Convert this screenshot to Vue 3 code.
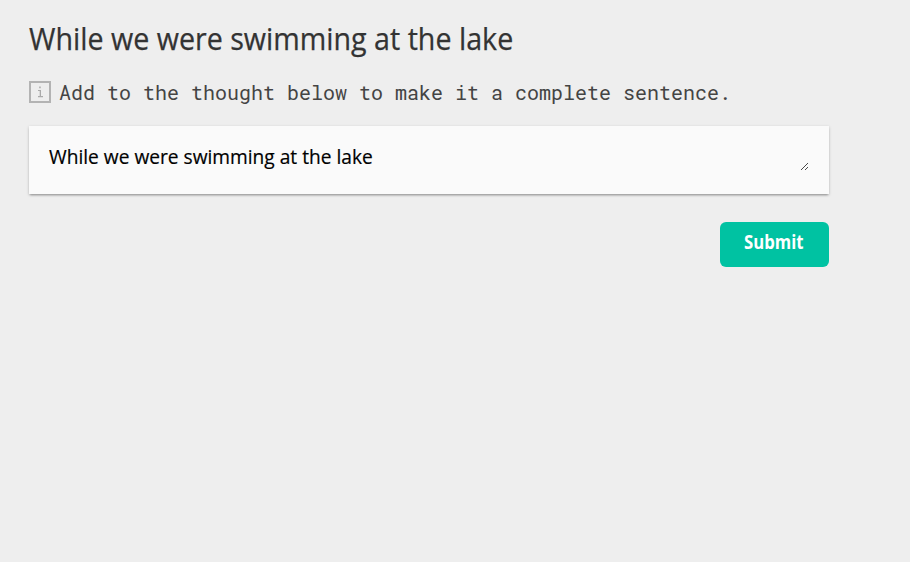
<template>
  <main class="page">
    <h1 class="title"><span>While we were swimming at the lake</span></h1>
    <div class="hint">
      <svg class="icon" viewBox="0 0 22 22" width="22" height="22">
        <rect x="1" y="1" width="20" height="20" fill="none" stroke="#b3b3b3" stroke-width="2" />
        <path d="M10.2 5.6h1.5v1.6h-1.5zM9 9h3v6.500h-1.300v-5.500h-1.700zM9 15h5v1.200h-5z" fill="#aaa" />
      </svg>
      <p>Add to the thought below to make it a complete sentence.</p>
    </div>
    <div class="card">
      <div class="field"><span>While we were swimming at the lake</span></div>
      <svg class="grip" viewBox="0 0 8 8" width="8" height="8" shape-rendering="crispEdges">
        <rect v-for="n in 7" :key="'a' + n" :x="n - 1" :y="7 - n" width="1" height="1" />
        <rect v-for="n in 3" :key="'b' + n" :x="n + 3" :y="7 - n" width="1" height="1" />
      </svg>
    </div>
    <button class="submit"><span>Submit</span></button>
  </main>
</template>

<script setup>
</script>

<style>
body { background: #eeeeee; }
</style>

<style scoped>
.page { width: 800px; padding: 18px 29px; display: flex; flex-direction: column; font-family: "Open Sans", "Noto Sans", sans-serif; }
.title { margin: 0; height: 40px; line-height: 40px; font-size: 30.5px; font-weight: 400; color: #333; white-space: nowrap; -webkit-text-stroke: .25px #333; }
.title span, .field span { display: inline-block; transform-origin: 0 50%; transform: scaleX(.939); }
.hint { display: flex; align-items: center; gap: 8px; height: 24px; margin-top: 22px; }
.hint p { margin: 0; font-family: "Roboto Mono", "DejaVu Sans Mono", monospace; font-size: 20px; line-height: 24px; white-space: nowrap; color: #444; }
.card { box-sizing: border-box; margin-top: 22px; height: 68px; padding: 18px 20px 23px; display: flex; justify-content: space-between; align-items: flex-end; background: #fafafa; box-shadow: 0 1px 3px rgba(0,0,0,.2), 0 2px 2px -1px rgba(0,0,0,.28); }
.field { height: 24px; align-self: flex-start; font-size: 20.4px; line-height: 24px; color: #000; white-space: nowrap; -webkit-text-stroke: .2px #000; }
.grip { fill: #4b4b4b; }
.submit { align-self: flex-end; width: 109px; height: 45px; margin-top: 28px; padding: 0 1px 5px 0; border: 0; border-radius: 6px; background: #00c2a2; color: #fff; font: 700 19px "Open Sans", "Noto Sans", sans-serif; }
.submit span { display: inline-block; transform: scaleX(.88); }
</style>
